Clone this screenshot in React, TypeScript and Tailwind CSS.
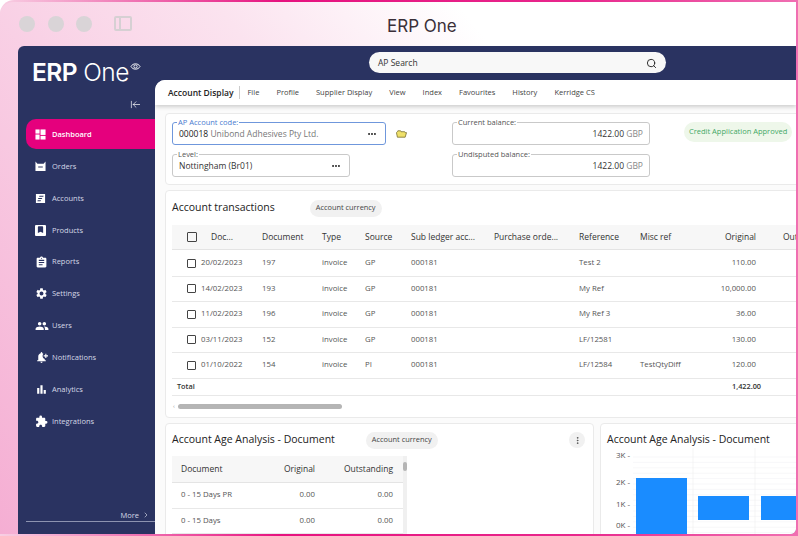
import { Search, ChevronRight, EllipsisVertical, ArrowLeftToLine, Ellipsis } from 'lucide-react'
import { MdAssignment, MdSettings, MdPeople, MdNotificationAdd, MdBarChart, MdExtension, MdBookmark } from 'react-icons/md'

const font = 'font-["Open_Sans",sans-serif]'

function DashIcon() {
  return (
    <svg viewBox="0 0 12 12" className="w-[11px] h-[11px] fill-white">
      <rect x="0.5" y="0.5" width="4.5" height="4.5" />
      <rect x="0.5" y="6" width="4.5" height="5.5" />
      <rect x="6" y="0.5" width="5.5" height="6" />
      <rect x="6" y="7.5" width="5.5" height="4" />
    </svg>
  )
}

function OrdersIcon() {
  return (
    <svg viewBox="0 0 12 12" className="w-[11px] h-[11px] fill-white">
      <path d="M0.5 0.5 L2.6 3 H9.4 L11.5 0.5 V11 H0.5 Z M3.5 6 V7 H8.5 V6 Z" fillRule="evenodd" />
    </svg>
  )
}

function AccountsIcon() {
  return (
    <svg viewBox="0 0 12 12" className="w-[11px] h-[11px] fill-white">
      <path d="M1 1 H11 V11 H1 Z M5 3 L4.4 4.2 H9 L9.4 3 Z M3.8 5.4 L3.2 6.6 H7.4 L8 5.4 Z M3 7.8 L2.6 9 H6 L6.6 7.8 Z" fillRule="evenodd" />
    </svg>
  )
}

function ProductsIcon() {
  return (
    <div className="w-[11px] h-[11px] bg-white rounded-[1px] flex justify-center">
      <MdBookmark className="w-[9px] h-[9px] text-[#2a3361]" />
    </div>
  )
}

function FolderIcon() {
  return (
    <svg viewBox="0 0 12 8" className="ml-[10px] w-[11px] h-[8px]">
      <path d="M1.5 1.5 L2 0.5 H5 L5.5 1.5 H9.5 L10 2.5 H11.5 L10 7.5 H1.5 L0.5 2.5 Z" fill="#efe06a" stroke="#6e6424" strokeWidth="0.8" />
    </svg>
  )
}

const navItems = [
  { label: 'Dashboard', icon: <DashIcon />, active: true },
  { label: 'Orders', icon: <OrdersIcon /> },
  { label: 'Accounts', icon: <AccountsIcon /> },
  { label: 'Products', icon: <ProductsIcon /> },
  { label: 'Reports', icon: <MdAssignment className="w-[13px] h-[13px]" /> },
  { label: 'Settings', icon: <MdSettings className="w-[13px] h-[13px]" /> },
  { label: 'Users', icon: <MdPeople className="w-[14px] h-[14px]" /> },
  { label: 'Notifications', icon: <MdNotificationAdd className="w-[13px] h-[13px]" /> },
  { label: 'Analytics', icon: <MdBarChart className="w-[13px] h-[13px]" /> },
  { label: 'Integrations', icon: <MdExtension className="w-[13px] h-[13px]" /> },
]

const tabs = ['File', 'Profile', 'Supplier Display', 'View', 'Index', 'Favourites', 'History', 'Kerridge CS']

const rows = [
  ['20/02/2023', '197', 'invoice', 'GP', '000181', 'Test 2', '', '110.00'],
  ['14/02/2023', '193', 'invoice', 'GP', '000181', 'My Ref', '', '10,000.00'],
  ['11/02/2023', '196', 'invoice', 'GP', '000181', 'My Ref 3', '', '36.00'],
  ['03/11/2023', '152', 'invoice', 'GP', '000181', 'LF/12581', '', '130.00'],
  ['01/10/2022', '154', 'invoice', 'PI', '000181', 'LF/12584', 'TestQtyDiff', '120.00'],
]

const ageRows = [
  ['0 - 15 Days PR', '0.00', '0.00'],
  ['0 - 15 Days', '0.00', '0.00'],
]

const gridCols = 'grid grid-cols-[11px_64px_60px_43px_46px_83px_85px_61px_69px_47px_27px_40px]'

function Field({ label, blue, className, children }: { label: string; blue?: boolean; className: string; children: React.ReactNode }) {
  return (
    <div className={`relative h-[23px] rounded-[3px] border flex items-center px-[6px] pt-[1px] text-[8.5px] ${blue ? 'border-[#6f97dc]' : 'border-[#c9c9c9]'} ${className}`}>
      <span className={`absolute -top-[5px] left-[4px] px-[1px] bg-white leading-[9px] text-[7.5px] ${blue ? 'text-[#4a7bd0]' : 'text-[#555]'}`}>{label}</span>
      {children}
    </div>
  )
}

function Check({ size = 'w-[9px] h-[9px]' }: { size?: string }) {
  return <div className={`${size} border border-[#444] rounded-[1px]`} />
}

function Pill({ children }: { children: React.ReactNode }) {
  return <span className="h-[17px] px-[6px] rounded-full bg-[#f1f1f1] text-[7.4px] text-[#444] flex items-center">{children}</span>
}

function Chart() {
  const lines = [0, 1, 2, 3, 4, 5, 6, 7, 8, 9, 10, 11, 12, 13, 14, 15]
  return (
    <svg viewBox="0 0 198 90" className="w-[198px] h-[90px]">
      {lines.map(i => (
        <line key={i} x1="32" x2="198" y1={9 + i * 5.4} y2={9 + i * 5.4} stroke="#f1f1f5" strokeWidth="0.6" />
      ))}
      <line x1="92" x2="92" y1="0" y2="90" stroke="#eeeeee" strokeWidth="0.6" />
      <line x1="154" x2="154" y1="0" y2="90" stroke="#eeeeee" strokeWidth="0.6" />
      <rect x="35" y="30" width="51" height="60" fill="#1a8cff" />
      <rect x="97" y="48" width="51" height="24" fill="#1a8cff" />
      <rect x="160" y="48" width="38" height="24" fill="#1a8cff" />
      <g fontSize="8" fill="#555" fontFamily="Open Sans">
        <text x="15" y="10">3K -</text>
        <text x="15" y="37">2K -</text>
        <text x="15" y="59">1K -</text>
        <text x="15" y="80">0K -</text>
      </g>
    </svg>
  )
}

export default function App() {
  return (
    <div className={`w-[798px] h-[536px] overflow-hidden bg-white ${font}`}>
      <div className="w-full h-full rounded-tl-[14px] pt-[1.5px] pr-[2px] pb-[2px] bg-[linear-gradient(90deg,#f8cfe3_0%,#e6127f_35%,#e8268c_72%,#f06fb2_100%)]">
        <div className="w-full h-full rounded-tl-[13px] rounded-br-[6px] overflow-hidden flex flex-col bg-[linear-gradient(232deg,#ffffff_28%,#fbe3ef_48%,#f5aed3_100%)]">
          {/* Title bar */}
          <div className="h-[44.5px] shrink-0 flex items-center pl-[19px] relative">
            <div className="flex gap-[12.5px]">
              <span className="w-[16px] h-[16px] rounded-full bg-[#d9d4d7]" />
              <span className="w-[16px] h-[16px] rounded-full bg-[#d9d4d7]" />
              <span className="w-[16px] h-[16px] rounded-full bg-[#d9d4d7]" />
            </div>
            <div className="ml-[22px] w-[18px] h-[15px] border-2 border-[#d6d0d3] rounded-[2px] flex">
              <div className="w-[5px] border-r-2 border-[#d6d0d3]" />
            </div>
            <span className="absolute left-[387px] top-[13px] text-[17px] leading-[22px] text-[#3a2f38] font-['Inter',sans-serif]">ERP One</span>
          </div>

          <div className="flex-1 min-h-0 ml-[18px] rounded-tl-[6px] bg-[#2a3361] flex overflow-hidden">
            {/* Sidebar */}
            <aside className="w-[137px] shrink-0 flex flex-col text-white">
              <div className="pl-[14px] pt-[11px] h-[44px] flex items-start">
                <span className="text-[24.5px] leading-[30px] font-semibold tracking-[-0.5px] font-['Inter',sans-serif]">ERP</span>
                <span className="ml-[6px] text-[24.5px] leading-[30px] font-light tracking-[-0.5px] font-['Inter',sans-serif]">One</span>
                <svg viewBox="0 0 12 10" className="ml-[1px] w-[11px] h-[9px] mt-[5px] fill-none stroke-white">
                  <path d="M1 5 C3 1 9 1 11 5 C9 9 3 9 1 5 Z" />
                  <circle cx="6" cy="5" r="1.8" />
                </svg>
              </div>
              <div className="h-[29px] flex items-center justify-end pr-[14px]">
                <ArrowLeftToLine className="w-[11px] h-[11px]" strokeWidth={1.5} />
              </div>
              <nav className="pl-[8px] flex flex-col gap-[1.9px]">
                {navItems.map(item => (
                  <div
                    key={item.label}
                    className={`h-[30px] pt-[1px] flex items-center rounded-l-[10px] text-[7.5px] ${item.active ? 'bg-[#e5007d] font-semibold' : 'text-[#d5d8e6]'}`}
                  >
                    <span className="w-[26px] pl-[9px] flex justify-start text-white">{item.icon}</span>
                    {item.label}
                  </div>
                ))}
              </nav>
              <div className="mt-auto mb-[12px] ml-[8px] h-[12px] border-b border-[#8d93b0] flex items-start justify-end pr-[5px] text-[7.5px] leading-[10px] text-[#d5d8e6] gap-[3px]">
                More <ChevronRight className="w-[8px] h-[8px] mt-[1px]" />
              </div>
            </aside>

            {/* Content */}
            <div className="flex-1 min-w-0 flex flex-col">
              <div className="h-[34px] shrink-0 relative">
                <div className="absolute left-[214px] top-[6px] w-[297px] h-[21px] rounded-full bg-[#f8f8f8] flex items-center justify-between pl-[9px] pr-[9px] pt-[1px] text-[8.5px] text-[#333]">
                  AP Search
                  <Search className="w-[11px] h-[11px] text-[#222]" />
                </div>
              </div>
              <main className="flex-1 min-h-0 rounded-tl-[10px] bg-[#fbfbfb] overflow-hidden flex flex-col">
                <div className="h-[25px] shrink-0 bg-white shadow-[0_2px_4px_rgba(0,0,0,0.18)] flex items-center pl-[13px] text-[7.5px] text-[#444] relative">
                  <span className="text-[8.5px] font-semibold text-[#222] pr-[5px] border-r border-[#ccc] leading-[13px]">Account Display</span>
                  <div className="ml-[8px] pt-[1px] flex gap-[17px]">
                    {tabs.map(t => <span key={t}>{t}</span>)}
                  </div>
                </div>

                <div className="pl-[10px] pt-[8px] flex flex-col gap-[5px]">
                  {/* Account header */}
                  <div className="h-[72px] w-[640px] bg-white border border-[#eaeaea] rounded-l-[4px] pl-[6px] pt-[8px] flex">
                    <div className="w-[280px] flex flex-col gap-[9px]">
                      <div className="flex items-center">
                        <Field label="AP Account code:" blue className="w-[214px]">
                          <span className="text-[#222]">000018&nbsp;</span>
                          <span className="text-[#777]">Unibond Adhesives Pty Ltd.</span>
                          <Ellipsis className="ml-auto w-[10px] h-[10px] mr-[2px] text-[#222]" strokeWidth={3} />
                        </Field>
                        <FolderIcon />
                      </div>
                      <Field label="Level:" className="w-[178px]">
                        <span className="text-[#333]">Nottingham (Br01)</span>
                        <Ellipsis className="ml-auto w-[10px] h-[10px] mr-[2px] text-[#222]" strokeWidth={3} />
                      </Field>
                    </div>
                    <div className="w-[232px] flex flex-col gap-[9px]">
                      <Field label="Current balance:" className="w-[198px] justify-end">
                        <span className="text-[#333]">1422.00&nbsp;</span><span className="text-[#888]">GBP</span>
                      </Field>
                      <Field label="Undisputed balance:" className="w-[198px] justify-end">
                        <span className="text-[#333]">1422.00&nbsp;</span><span className="text-[#888]">GBP</span>
                      </Field>
                    </div>
                    <span className="h-[20px] px-[5px] rounded-full bg-[#eef7ea] text-[7.5px] text-[#3fa865] flex items-center whitespace-nowrap">Credit Application Approved</span>
                  </div>

                  {/* Transactions */}
                  <div className="h-[228px] w-[640px] bg-white border border-[#eaeaea] rounded-l-[4px] overflow-hidden pl-[6px] shrink-0">
                    <div className="h-[34px] flex items-center">
                      <span className="text-[10.5px] font-medium text-[#222]">Account transactions</span>
                      <span className="ml-[35px]"><Pill>Account currency</Pill></span>
                    </div>
                    <div className={`${gridCols} w-[680px] h-[25px] items-center bg-[#f7f7f7] border-b border-[#e4e4e4] pl-[15px] text-[8.5px] font-medium text-[#333]`}>
                      <Check size="w-[10px] h-[10px]" />
                      <span className="pl-[13px]">Doc...</span>
                      <span>Document</span>
                      <span>Type</span>
                      <span>Source</span>
                      <span className="whitespace-nowrap">Sub ledger acc...</span>
                      <span className="whitespace-nowrap">Purchase orde...</span>
                      <span>Reference</span>
                      <span>Misc ref</span>
                      <span className="col-span-2 text-right -ml-[30px] pr-[27px]">Original</span>
                      <span>Out</span>
                    </div>
                    {rows.map((r, i) => (
                      <div key={r[0]} className={`${gridCols} w-[680px] h-[25.5px] items-center border-b border-[#e8e8e8] pl-[15px] text-[7.8px] text-[#555] ${i === 0 ? 'mt-[1px]' : ''}`}>
                        <Check />
                        <span className="pl-[3px] whitespace-nowrap">{r[0]}</span>
                        <span>{r[1]}</span>
                        <span>{r[2]}</span>
                        <span>{r[3]}</span>
                        <span className="col-span-2">{r[4]}</span>
                        <span>{r[5]}</span>
                        <span>{r[6]}</span>
                        <span className="col-span-2 text-right -ml-[30px] pr-[27px]">{r[7]}</span>
                      </div>
                    ))}
                    <div className="w-[680px] h-[17px] flex items-center border-b border-[#e8e8e8] pl-[5px] pr-[91px] text-[7.3px] font-semibold text-[#333] justify-between">
                      <span>Total</span>
                      <span>1,422.00</span>
                    </div>
                    <div className="h-[22px] flex items-center pl-[1px] gap-[3px]">
                      <span className="text-[6px] text-[#999]">‹</span>
                      <div className="w-[164px] h-[5px] rounded-full bg-[#b5b5b5]" />
                    </div>
                  </div>

                  {/* Bottom cards */}
                  <div className="flex gap-[6px] w-[640px] shrink-0">
                    <div className="w-[429px] h-[120px] bg-white border border-[#eaeaea] rounded-t-[4px] pl-[6px] overflow-hidden shrink-0">
                      <div className="h-[32px] flex items-center pr-[8px]">
                        <span className="text-[10.5px] font-medium text-[#222]">Account Age Analysis - Document</span>
                        <span className="ml-[31px]"><Pill>Account currency</Pill></span>
                        <span className="ml-auto w-[16px] h-[16px] rounded-full bg-[#f1f1f1] flex items-center justify-center">
                          <EllipsisVertical className="w-[9px] h-[9px] text-[#444]" />
                        </span>
                      </div>
                      <div className="w-[235px] flex">
                        <div className="w-[231px]">
                          <div className="h-[27px] bg-[#f7f7f7] border-b border-[#e4e4e4] grid grid-cols-[70px_64px_78px] items-center pl-[9px] text-[8.5px] font-medium text-[#333]">
                            <span>Document</span>
                            <span className="text-right">Original</span>
                            <span className="text-right">Outstanding</span>
                          </div>
                          {ageRows.map(r => (
                            <div key={r[0]} className="h-[25.5px] border-b border-[#e8e8e8] grid grid-cols-[70px_64px_78px] items-center pl-[9px] text-[7.8px] text-[#555]">
                              <span className="whitespace-nowrap">{r[0]}</span>
                              <span className="text-right">{r[1]}</span>
                              <span className="text-right">{r[2]}</span>
                            </div>
                          ))}
                        </div>
                        <div className="w-[4px] bg-[#f0f0f0] pt-[6px]">
                          <div className="h-[9px] rounded-full bg-[#b5b5b5]" />
                        </div>
                      </div>
                    </div>
                    <div className="w-[220px] h-[120px] bg-white border border-[#eaeaea] rounded-t-[4px] overflow-hidden shrink-0">
                      <div className="h-[24px] flex items-center pl-[6px] pt-[8px] text-[10.5px] font-medium text-[#222] whitespace-nowrap">Account Age Analysis - Document</div>
                      <Chart />
                    </div>
                  </div>
                </div>
              </main>
            </div>
          </div>
        </div>
      </div>
    </div>
  )
}
